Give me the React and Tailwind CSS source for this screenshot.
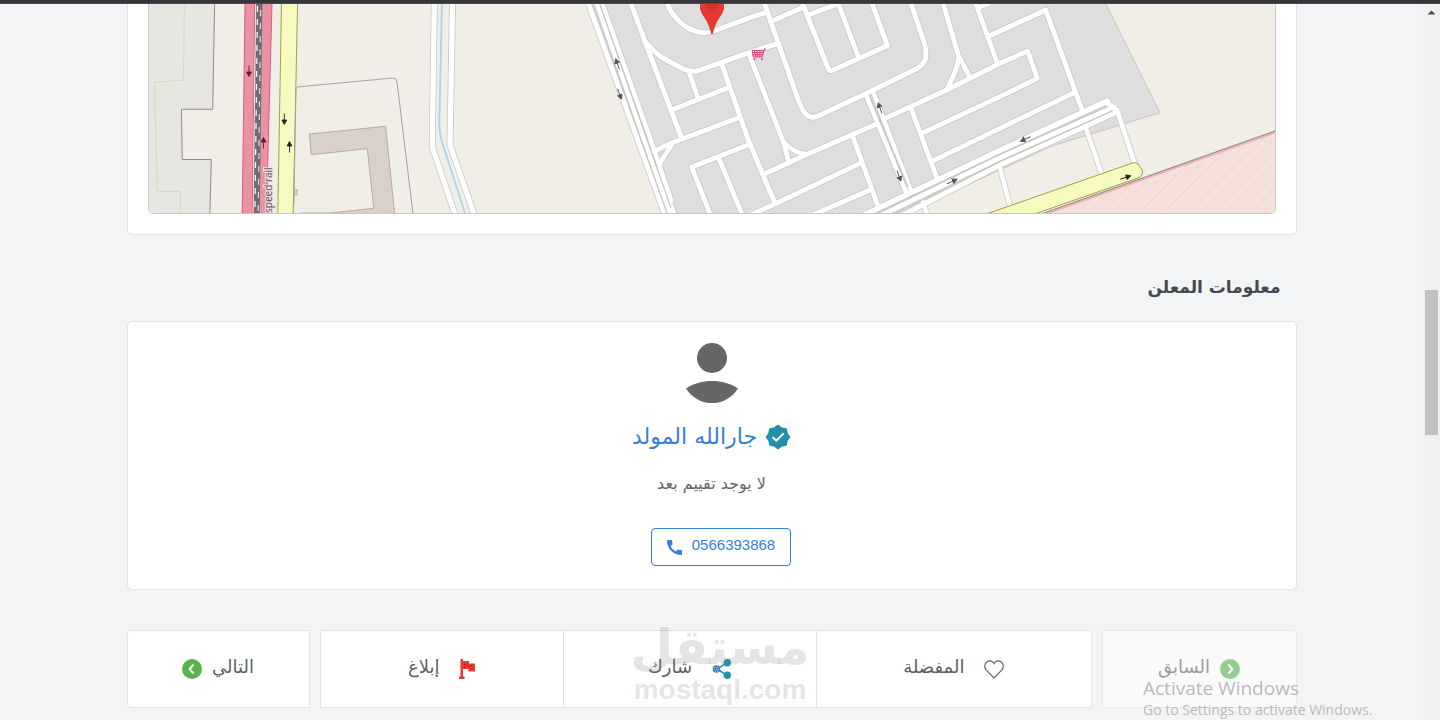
const ROADS = [
  ["M588.5 4L664.5 214", 5],
  ["M597 4L670 214", 4.5],
  ["M602.5 4L655 152L671 200", 4.5],
  ["M630.5 2L645 41.7L681.7 138.3", 5],
  ["M645 41.7Q656 54 663.3 58.3L683.3 69Q690 72 697 71L750 52.3L778.3 43.3", 5],
  ["M667 2Q669 10 675 16.7Q680 23 686.7 27.3Q695 32 703.3 32.7Q709 33 716.7 30L750 17.7L766.7 12.3", 5],
  ["M689.3 72.7L698.3 99", 4.8],
  ["M671.7 110L729.3 87.3", 4.8],
  ["M653.3 151.7L671.7 143L740 117.3", 4.8],
  ["M721.7 64L748.3 140L775 203.3", 5],
  ["M671.7 145L661 161Q659 167 659.5 172L674 214", 4.8],
  ["M750 144.3L691.7 167L710 214", 4.8],
  ["M719.3 159.3L742 214", 4.8],
  ["M764 2L778.3 43.3L798.3 100Q803 113 808 116Q812 118 817 116.5L866.7 93.3L918 68Q926 63 926 54Q926 48 924 42L910.5 2", 5],
  ["M772.7 20.7L803.3 7.3", 4.8],
  ["M802 2L828 68Q829 71.5 832 70.5L887.3 45.7L871.5 2", 5],
  ["M809.3 14.5L838 4", 4.8],
  ["M837.6 2L857.7 55", 4.8],
  ["M749.3 55L783.3 141.7L789 163", 4.8],
  ["M783.3 141.7Q794 153 806.7 154.3", 4.5],
  ["M764.3 174L806.7 154.5L876.7 124", 5],
  ["M866 95L906.7 194", 4.5],
  ["M872.7 90.7L910.7 190", 4.5],
  ["M852.3 135L878.3 207", 4.8],
  ["M753 214L775 204L860 163.3", 4.8],
  ["M815 214L870 190", 4.8],
  ["M885 118.5L946.7 90L1000 63.3L1027.7 51L1037.3 78.3L1000 96.7L921.7 133.3", 4.8],
  ["M994 33.8L1045.7 10L1081.7 109", 5],
  ["M994 33.8L989.5 36", 5],
  ["M942.7 2L958.3 55L970 77.3", 4.8],
  ["M958.7 58Q958 65 955 71.7L947.3 89", 4.8],
  ["M975.3 2L997.3 63.3", 4.8],
  ["M978 8L988 4", 4.5],
  ["M910.7 107.3L937.3 179", 4.8],
  ["M933.3 160.7L1000 128.3L1075 92.3", 4.8],
  ["M1086 128.3L1101.7 174", 4.5],
  ["M1000 168L1010 206", 4.5],
  ["M923 202L927 214", 4.5],
  ["M866 214L1000 150.5L1107.3 101L1110 107", 5.5],
  ["M884 214L1000 157.7L1114 107", 5],
  ["M903 215L1000 165L1117 112", 5],
  ["M1108 104L1117 110L1135.5 166", 4.8],
  ["M434.3 4L432.3 140Q432 149 435 155L455 214", 5.2],
  ["M452.5 4L450 145L474 214", 5.2],
];

const MAP_ARROWS = [
  [249, 71, 180, "#7a1138"],
  [263.5, 143, 0, "#7a1138"],
  [284.3, 119, 180, "#222"],
  [289.5, 147, 0, "#222"],
  [617.5, 64, -20, "#555"],
  [619.5, 94, 160, "#555"],
  [880, 108, -20, "#555"],
  [899, 176, 160, "#555"],
  [952, 181.5, 66, "#555"],
  [1025.5, 139, 246, "#555"],
  [1125.5, 177.5, 72, "#222"],
];

function LocationMap() {
  return (
    <svg
      className="block h-full w-full"
      viewBox="149 4 1126 209"
      preserveAspectRatio="xMidYMid slice"
      role="img"
      aria-label="الخريطة"
    >
      <defs>
        <pattern id="hatch" width="12.4" height="12.4" patternUnits="userSpaceOnUse">
          <path d="M-1 13.4L13.4 -1M-1 1L1 -1M11.4 13.4L13.4 11.4" stroke="#efcfca" strokeWidth="0.9" />
        </pattern>
      </defs>
      <rect x="0" y="0" width="1500" height="300" fill="#f1eee8" />
      <path d="M140 0H214.7L212.7 109.3H181.5L182.2 159.5H211.3L209.7 220H140Z" fill="#e7e6e1" />
      <path d="M214.7 0L212.7 109.3H181.5L182.2 159.5H211.3L209.7 220" fill="none" stroke="#8f8d8a" />
      <path d="M184.5 0L183.4 80L154.5 82.4L157.3 191.5H180.4V220" fill="none" stroke="#d8d8c2" />
      <path d="M245 4H255L252.5 214H242.2Z" fill="#e892a2" />
      <path d="M262 4H272L268.6 130L266.5 214H258.5Z" fill="#e892a2" />
      <path d="M245 4L242.2 214M254.8 4L252.3 214M272 4L268.6 130L266.5 214" stroke="#dc4f7c" strokeWidth="0.9" fill="none" />
      <path d="M255.9 4L253.3 214" stroke="#f5f1ee" strokeWidth="1.2" />
      <path d="M257.8 4L255.2 214M260.8 4L258.2 214" stroke="#6f6b6f" strokeWidth="3.2" />
      <path d="M257.5 6L254.9 214" stroke="#fff" strokeWidth="1.2" strokeDasharray="6 7" />
      <path d="M260.6 10L258.2 214" stroke="#e0dcdf" strokeWidth="1.2" strokeDasharray="6 7" />
      <path d="M281.5 3H297.6L293.2 214H277.8Z" fill="#f7fabf" />
      <path d="M281.5 3L277.8 214M297.6 3L293.2 214" stroke="#a0a04e" />
      <path d="M293.8 205L296 89Q296 87 299 86.8L393 78Q396 77.6 397 82L413 214" fill="none" stroke="#a5a2a0" />
      <path d="M309.4 134L385.6 126.3L394.8 215H300V213L330 213L373.7 208.3L367.3 148.7L311.3 154.7Z" fill="#d9d0c9" stroke="#b9aca4" />
      <rect x="294.5" y="189.5" width="3" height="5.5" fill="#d2cdc8" stroke="#aaa6a2" strokeWidth="0.6" />
      <path d="M604 0H1104L1160 112.7L1050 146.7L905 214H672Z" fill="#dedede" stroke="#c6c6c4" />
      <g fill="none" stroke="#c9c9c6" strokeLinejoin="round">
        {ROADS.map(([d, w]) => (
          <path key={d} d={d} strokeWidth={w + 1.6} />
        ))}
      </g>
      <g fill="none" stroke="#fff" strokeLinejoin="round" strokeLinecap="round">
        {ROADS.map(([d, w]) => (
          <path key={d} d={d} strokeWidth={w} />
        ))}
      </g>
      <path
        d="M592.8 4L667.3 214M599.8 4L671 208M869.5 95L908 187M875 214L1000 154.1L1108 106M894 214L1000 161.5L1112 111"
        fill="none"
        stroke="#c6c6c3"
        strokeWidth="1.2"
      />
      <path d="M442 0L439.3 125Q440 136 442.7 144L465.5 215" fill="none" stroke="#a6d5ec" strokeWidth="1.8" />
      <path d="M1280 129L1040 214.5H1280Z" fill="#f4e1dc" />
      <path d="M1280 129L1040 214.5H1280Z" fill="url(#hatch)" />
      <path d="M1280 131L1043 215" stroke="#f4aeb2" strokeWidth="1.6" />
      <path d="M1280 129.3L1040 214.5" stroke="#8f8c8a" strokeWidth="1.1" />
      <path d="M985 214.5L1133 162.8Q1136 162 1138 164L1141.5 169Q1144.5 175 1138 178L1033 214.5Z" fill="#f7fabf" stroke="#a09f45" />
      {MAP_ARROWS.map(([x, y, angle, color]) => (
        <path
          key={`${x}-${y}`}
          d="M0 5.5V-2M-2.4 -1L0 -5.5L2.4 -1Z"
          transform={`translate(${x} ${y}) rotate(${angle})`}
          fill={color}
          stroke={color}
          strokeWidth="0.9"
        />
      ))}
      <text
        transform="translate(271.5 213) rotate(-90)"
        direction="ltr"
        fontFamily="Noto Sans, sans-serif"
        fontSize="10"
        fill="#5c5c5c"
        stroke="#f3dfe1"
        strokeWidth="2"
        paintOrder="stroke"
      >
        speed rail
      </text>
      <g fill="none" stroke="#d5487f" strokeWidth="1.1">
        <path d="M765.5 48.5L764 50L762 57H753.5M752 50.5H763.5M752 50.5L753.5 57M754.5 50.5L755.5 57M757 50.5L757.5 57M760 50.5L759.7 57M752.5 52.5H763M753 54.7H762.5" />
        <path d="M753.5 59.3H755.5M761 59.3H763" strokeWidth="1.6" />
      </g>
      <path d="M700 0H724V9Q723 13 720 17Q715 24 712.8 34H711.2Q709 24 704 17Q701 13 700 9Z" fill="#e53a34" />
      <path d="M707.5 5.5H717M707.5 7.5H717M708.5 9.5H716M710.5 11.5H714" stroke="#8d1f2b" strokeDasharray="1 1" />
    </svg>
  );
}

function CircleArrow({ left }) {
  return (
    <svg className="size-5 shrink-0" viewBox="0 0 20 20" aria-hidden="true">
      <circle cx="10" cy="10" r="10" fill="#54b54c" />
      <path
        d={left ? "M11.6 5.5L7.6 10L11.6 14.5" : "M8.4 5.5L12.4 10L8.4 14.5"}
        fill="none"
        stroke="#fff"
        strokeWidth="1.9"
      />
    </svg>
  );
}

function Avatar() {
  return (
    <svg className="h-[60px] w-[52px]" viewBox="0 0 52 60" fill="#666" aria-hidden="true">
      <circle cx="26" cy="15" r="15" />
      <path d="M0 45.5C14 35.5 38 35.5 52 45.5C39 65 13 65 0 45.5Z" />
    </svg>
  );
}

function Verified() {
  return (
    <svg className="size-[26px] shrink-0" viewBox="0 0 26 26" aria-hidden="true">
      <path
        d="M13 1.5L16.3 4L21 5L22 9.7L24.5 13L22 16.3L21 21L16.3 22L13 24.5L9.7 22L5 21L4 16.3L1.5 13L4 9.7L5 5L9.7 4Z"
        fill="#2191a8"
        stroke="#2191a8"
        strokeWidth="1.6"
        strokeLinejoin="round"
      />
      <path d="M7.5 13L11.3 16.7L18.7 9.3" fill="none" stroke="#fff" strokeWidth="2" />
    </svg>
  );
}

function Phone() {
  return (
    <svg className="size-[15px] shrink-0" viewBox="3 3 18 18" fill="#357edd" aria-hidden="true">
      <path d="M7.2 10.6c1.5 2.6 3.500 4.700 6.200 6.100l1.800-1.800c.5-.4 1.100-.5 1.600-.3 1 .3 2 .5 3.200.5.600 0 1 .450 1 1V20c0 .550-.450 1-1 1-9.390 0-17-7.610-17-17 0-.550.450-1 1-1h4.200c.55 0 1 .450 1 1 0 1.250.1 2.100.4 3.200.1.500 0 1-.3 1.400z" />
    </svg>
  );
}

function Heart() {
  return (
    <svg className="h-[19px] w-5 shrink-0" viewBox="0 0 20 19" fill="none" stroke="#6b5f61" strokeWidth="1.2" aria-hidden="true">
      <path d="M10 18L2.300 10.200C0 7.700.3 4 2.700 2C5 .2 8.300.500 10 3.500C11.700.5 15 .2 17.300 2C19.700 4 20 7.700 17.700 10.200Z" />
    </svg>
  );
}

function Share() {
  return (
    <svg className="size-5 shrink-0" viewBox="0 0 20 20" aria-hidden="true">
      <path d="M15 3.6L5 10L15 16.4" fill="none" stroke="#2191a8" strokeWidth="1.6" />
      <circle cx="15.3" cy="3.7" r="3.7" fill="#2191a8" />
      <circle cx="15.3" cy="16.3" r="3.7" fill="#2191a8" />
      <circle cx="4.5" cy="10" r="3.8" fill="#3d82bb" />
      <path d="M2.5 8.5H7M2 10.5H7.5M3 12.5H6.5" stroke="#9cc3e4" strokeWidth=".8" strokeDasharray="1 1" />
    </svg>
  );
}

function Flag() {
  return (
    <svg className="h-5 w-4 shrink-0" viewBox="0 0 16 20" aria-hidden="true">
      <path d="M1.5 0H4V2H10V4.5H16V12.5H9.5V10H4V17.5H5.5V20H0V17.5H1.5Z" fill="#e53a34" />
      <path d="M5 5.5h1M7 6.5h1M9 7.5h1M5 8.5h1M11.500 6.500h1M12.500 9.500h1" stroke="#7a1d1d" />
    </svg>
  );
}

const actionClass =
  "flex h-[78px] items-center justify-center border-[#e2e4e6] bg-white text-[18px] leading-6 text-[#5f5f5f]";

export default function App() {
  return (
    <div className="relative flex min-h-screen flex-col overflow-hidden bg-[#f3f4f6] font-['DejaVu_Sans',sans-serif]">
      <div className="h-1 shrink-0 border-b border-[#4c4c4e] bg-[#35363a]" />
      <div className="flex flex-1">
        <main dir="rtl" className="min-w-0 flex-1 pb-3">
          <div className="mx-auto max-w-[1170px]">
            <section className="rounded-b-[5px] border border-t-0 border-[#e2e4e6] bg-white px-5 pb-5">
              <div className="h-[210px] overflow-hidden rounded-b-[5px] border border-t-0 border-[#c8c8c8]">
                <LocationMap />
              </div>
            </section>

            <h2 className="mt-9 px-4 text-[17px] leading-8 font-bold text-[#444a4d]">معلومات المعلن</h2>

            <section className="mt-[18px] flex flex-col items-center rounded-[5px] border border-[#e2e4e6] bg-white pt-[21px] pb-[23px]">
              <Avatar />
              <div className="mt-4 flex items-center gap-2">
                <Verified />
                <a href="#advertiser" className="text-[22px] leading-9 text-[#357edd]">
                  جارالله المولد
                </a>
              </div>
              <p className="mt-[17px] text-[16px] leading-6 text-[#666]">لا يوجد تقييم بعد</p>
              <a
                href="tel:0566393868"
                dir="ltr"
                className="mt-8 ml-[19px] flex h-[38px] items-center gap-2.5 rounded border border-[#357edd] px-[15px] font-['Liberation_Sans',sans-serif] text-[15px] text-[#357edd]"
              >
                <Phone />
                <span className="pb-1">0566393868</span>
              </a>
            </section>

            <nav className="mt-10 grid grid-cols-[195fr_772fr_183fr] gap-2.5">
              <button type="button" disabled className={`${actionClass} gap-2.5 rounded-r border opacity-60`}>
                <CircleArrow />
                <span className="pb-1">السابق</span>
              </button>
              <div className="grid grid-cols-[275fr_254fr_243fr] divide-x divide-[#e2e4e6] border border-[#e2e4e6]">
                <button type="button" className={`${actionClass} -my-px gap-5 border-y`}>
                  <Heart />
                  <span className="pb-1">المفضلة</span>
                </button>
                <button type="button" className={`${actionClass} -my-px gap-5 border-y`}>
                  <Share />
                  <span className="pb-1">شارك</span>
                </button>
                <button type="button" className={`${actionClass} -my-px gap-5 border-y`}>
                  <Flag />
                  <span className="pb-1">إبلاغ</span>
                </button>
              </div>
              <button type="button" className={`${actionClass} gap-2.5 rounded-l border`}>
                <span className="pb-1">التالي</span>
                <CircleArrow left />
              </button>
            </nav>
          </div>
        </main>

        <div className="flex w-[17px] shrink-0 flex-col items-center bg-[#f0f0f0]" aria-hidden="true">
          <svg className="mt-1.5 h-[5px] w-[9px]" viewBox="0 0 9 5">
            <path d="M0.5 4.500L4.500 0.500L8.500 4.500Z" fill="#505050" />
          </svg>
          <div className="mt-[275px] h-[145px] w-[13px] bg-[#c1c1c0]" />
        </div>
      </div>

      <div className="pointer-events-none absolute bottom-3.5 left-1/2 flex -translate-x-1/2 flex-col items-center font-bold text-[#777]/20">
        <span className="text-[49px] leading-[52px]">مستقل</span>
        <span className="font-['Liberation_Sans',sans-serif] text-[28px] leading-8">mostaql.com</span>
      </div>
      <div className="pointer-events-none absolute right-[61px] bottom-0 w-[236px] font-['Open_Sans',sans-serif] whitespace-nowrap text-[#a9a9a9]/80">
        <p className="text-[19px] leading-6">Activate Windows</p>
        <p className="text-[14px] leading-5">Go to Settings to activate Windows.</p>
      </div>
    </div>
  );
}
